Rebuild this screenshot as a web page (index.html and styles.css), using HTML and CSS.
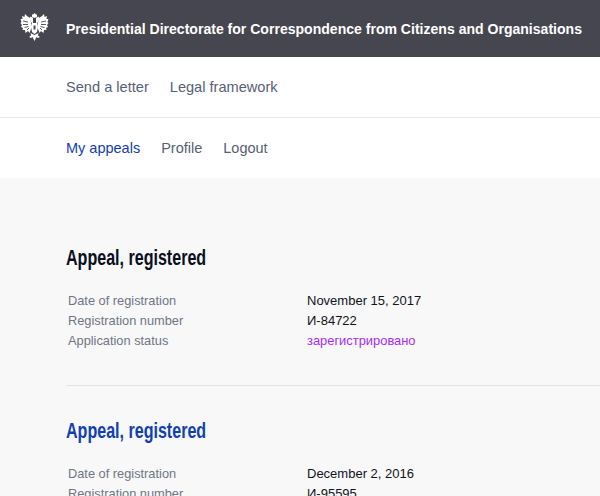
FILE: index.html
```html
<!DOCTYPE html>
<html lang="en">
<head>
    <meta charset="UTF-8">
    <title>Presidential Directorate for Correspondence from Citizens and Organisations</title>
    <link rel="stylesheet" href="styles.css">
</head>
<body>
    <header class="top">
        <svg class="emblem" viewBox="0 0 29 28" width="29" height="28">
            <defs>
                <g id="wing">
                    <path d="M10 5L7 3 5 1 4.500 4 2 3 2.500 6 0.500 6 1.500 9 0.500 10 2 12 1 14 3 15 2.500 17 5 17 5.500 20 8 18 9.500 20 11 16 11.500 12z" fill="#fff"/>
                    <path d="M3 8L8 9M3 11.500L8 11.500M4.500 14.500L8.500 13.500M7 17L9 15" stroke="#464650" stroke-width="0.9"/>
                    <path d="M10.500 3.500L13 5 13 10 11 9.500 9.500 5.500z" fill="#fff"/>
                </g>
            </defs>
            <use href="#wing"/>
            <use href="#wing" transform="matrix(-1 0 0 1 29 0)"/>
            <path d="M14.500 0L16 1.500 17 1.500 17 4 14.500 5 12 4 12 1.500 13 1.500z" fill="#fff"/>
            <path d="M12 10H17L18 14 17 19 14.500 21 12 19 11 14z" fill="#fff"/>
            <path d="M13.500 12.500H15.500V16.500H13.500z" fill="#464650"/>
            <path d="M10.500 20L14.500 22 18.500 20 18 22.500 20 24 18 25 16.500 24 14.500 28 12.500 24 11 25 9 24 11 22.500z" fill="#fff"/>
        </svg>
        <a class="top-title" href="#">Presidential Directorate for Correspondence from Citizens and Organisations</a>
    </header>

    <nav class="menu menu-main">
        <a href="#">Send a letter</a>
        <a href="#">Legal framework</a>
    </nav>
    <nav class="menu">
        <a class="active" href="#">My appeals</a>
        <a href="#">Profile</a>
        <a href="#">Logout</a>
    </nav>

    <main class="content">
        <section class="appeal">
            <h2>Appeal, registered</h2>
            <dl class="details">
                <dt>Date of registration</dt><dd>November 15, 2017</dd>
                <dt>Registration number</dt><dd>И-84722</dd>
                <dt>Application status</dt><dd class="status">зарегистрировано</dd>
            </dl>
        </section>
        <section class="appeal">
            <h2><a href="#">Appeal, registered</a></h2>
            <dl class="details">
                <dt>Date of registration</dt><dd>December 2, 2016</dd>
                <dt>Registration number</dt><dd>И-95595</dd>
            </dl>
        </section>
    </main>
</body>
</html>
```

FILE: styles.css
```css
html, body {
    margin: 0;
    height: 496px;
    overflow: hidden;
}

body {
    font-family: "Liberation Sans", Arial, sans-serif;
    background: #f8f8f8;
}

a {
    text-decoration: none;
}

.top {
    display: flex;
    align-items: center;
    height: 57px;
    padding-left: 20px;
    background: #464650;
}

.emblem {
    flex: none;
    margin-right: 17px;
    margin-top: -3px;
}

.top-title {
    color: #fff;
    font-size: 14.06px;
    font-weight: 700;
    white-space: nowrap;
}

.menu {
    display: flex;
    align-items: center;
    gap: 21px;
    height: 60px;
    padding-left: 66px;
    background: #fff;
    font-size: 14.5px;
}

.menu-main {
    border-bottom: 1px solid #e6e6e6;
    font-size: 14.6px;
}

.menu a {
    color: #586075;
}

.menu a.active {
    color: #1240b0;
}

.content {
    padding: 66px 0 0 66px;
}

.appeal {
    padding-bottom: 34px;
    border-bottom: 1px solid #e4e4e4;
    margin-bottom: 31px;
}

.appeal h2 {
    margin: 0 0 19px;
    font-size: 22px;
    line-height: 28px;
    font-weight: 700;
    color: #0a0f1e;
    transform: scaleX(0.73);
    transform-origin: left center;
    white-space: nowrap;
}

.appeal h2 a {
    color: #1240b0;
}

.details {
    display: grid;
    grid-template-columns: 239px 1fr;
    margin: 0 0 0 2px;
    font-size: 13px;
    line-height: 20px;
}

.details dt {
    color: #6f7585;
    font-size: 12.8px;
}

.details dd {
    margin: 0;
    color: #10131c;
}

.details .status {
    color: #a62cff;
    font-size: 12.9px;
}
```
